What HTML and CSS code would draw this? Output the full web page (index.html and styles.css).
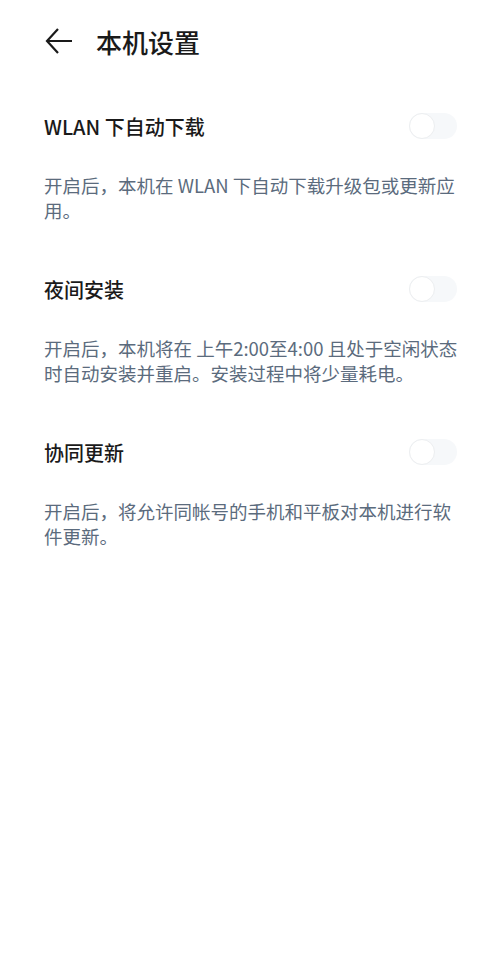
FILE: index.html
```html
<!DOCTYPE html>
<html lang="zh-CN">
<head>
    <meta charset="UTF-8">
    <meta name="viewport" content="width=device-width, initial-scale=1.0">
    <title>本机设置</title>
    <link rel="stylesheet" href="styles.css">
</head>
<body>
    <header class="topbar">
        <svg class="back" width="28" height="28" viewBox="0 0 28 28">
            <path d="M27 14H2M13 2L2 14l11 12" fill="none" stroke="#1a1a1a" stroke-width="2.2"/>
        </svg>
        <h1>本机设置</h1>
    </header>

    <section class="option">
        <div class="option-head">
            <span>WLAN 下自动下载</span>
            <div class="switch"><div class="knob"></div></div>
        </div>
        <p class="desc">开启后，本机在 WLAN 下自动下载升级包或更新应用。</p>
    </section>

    <section class="option">
        <div class="option-head">
            <span>夜间安装</span>
            <div class="switch"><div class="knob"></div></div>
        </div>
        <p class="desc">开启后，本机将在 上午2:00至4:00 且处于空闲状态时自动安装并重启。安装过程中将少量耗电。</p>
    </section>

    <section class="option">
        <div class="option-head">
            <span>协同更新</span>
            <div class="switch"><div class="knob"></div></div>
        </div>
        <p class="desc">开启后，将允许同帐号的手机和平板对本机进行软件更新。</p>
    </section>
</body>
</html>
```

FILE: styles.css
```css
body {
    margin: 0;
    padding: 0;
    background: #fff;
    color: #1a1a1a;
    font-family: "Noto Sans CJK SC", "Noto Sans", sans-serif;
}
.topbar {
    display: flex;
    align-items: center;
    height: 64px;
    padding: 18px 0 0 45px;
    box-sizing: border-box;
}
.back {
    flex: none;
}
.topbar h1 {
    margin: 0 0 0 23px;
    font-size: 26px;
    font-weight: 500;
}
.option {
    padding: 0 44px;
}
.option:first-of-type {
    margin-top: 43px;
}
.option-head {
    display: flex;
    align-items: center;
    justify-content: space-between;
    height: 38px;
    font-size: 20px;
    font-weight: 500;
}
.switch {
    width: 48px;
    height: 26px;
    margin-right: -1px;
    border-radius: 13px;
    background: #f6f8fa;
}
.knob {
    width: 24px;
    height: 24px;
    border-radius: 50%;
    background: #fff;
    border: 1px solid #eceef0;
}
.desc {
    margin: 28px -8px 47px 0;
    font-size: 18.5px;
    line-height: 25px;
    color: #5b6b7d;
}
```
